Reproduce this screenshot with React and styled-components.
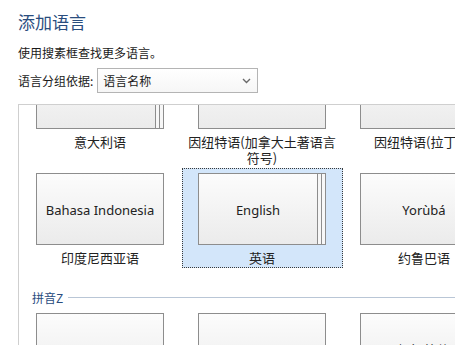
import React, { useLayoutEffect, useRef } from "react";
import styled, { createGlobalStyle, css } from "styled-components";

const Global = createGlobalStyle`
  html, body {
    margin: 0;
    padding: 0;
    width: 455px;
    height: 345px;
    overflow: hidden;
    background: #ffffff;
  }
  body {
    font-family: "Noto Sans", "Noto Sans CJK SC", sans-serif;
    color: #222;
  }
`;

const Page = styled.div`
  display: flex;
  flex-direction: column;
  width: 455px;
  height: 345px;
  overflow: hidden;
`;

const Header = styled.div`
  display: flex;
  flex-direction: column;
  padding: 10px 0 0 18px;
`;

const Title = styled.h1`
  margin: 0;
  font-family: "Noto Sans CJK SC", sans-serif;
  font-weight: 400;
  font-size: 17px;
  line-height: 24px;
  color: #2a4d7e;
`;

const Hint = styled.p`
  margin: 11px 0 0;
  font-family: "Noto Sans CJK SC", sans-serif;
  font-size: 12px;
  line-height: 16px;
  color: #1a1a1a;
`;

const GroupByRow = styled.div`
  display: flex;
  align-items: center;
  gap: 4px;
  margin-top: 7px;
  font-family: "Noto Sans CJK SC", sans-serif;
  font-size: 12px;
  color: #1a1a1a;
`;

const SelectBox = styled.div`
  display: flex;
  align-items: center;
  justify-content: space-between;
  box-sizing: border-box;
  width: 161px;
  height: 25px;
  padding: 0 6px 0 5px;
  border: 1px solid #b4b4b4;
  background: linear-gradient(#ffffff, #f6f6f6);
  font-size: 12px;
  color: #1a1a1a;
`;

const Panel = styled.div`
  box-sizing: border-box;
  margin: 11px 0 0 18px;
  width: 520px;
  height: 260px;
  flex-shrink: 0;
  border-top: 1px solid #cfcfcf;
  border-left: 1px solid #cfcfcf;
  overflow: hidden;
`;

const Content = styled.div`
  padding: 0 0 0 1px;
`;

const GroupHeader = styled.div`
  display: flex;
  align-items: center;
  gap: 5px;
  height: 16px;
  margin: ${(p) => (p.$first ? "8px" : "21px")} 0 3px;
  padding-left: 12px;
  font-family: "Noto Sans CJK SC", sans-serif;
  font-size: 12px;
  color: #2a4d7e;
  &::after {
    content: "";
    flex: 1;
    height: 1px;
    background: #b9c6d6;
  }
`;

const Grid = styled.div`
  display: grid;
  grid-template-columns: repeat(3, 161px);
  column-gap: 1px;
  align-items: stretch;
`;

const Item = styled.div`
  box-sizing: border-box;
  display: flex;
  flex-direction: column;
  align-items: center;
  padding: 4px 1px 1px 0;
  border: 1px solid transparent;
  ${(p) =>
    p.$selected &&
    css`
      border: 1px dotted #3a3a3a;
      background: #d3e6fa;
    `}
`;

const TileWrap = styled.div`
  position: relative;
  isolation: isolate;
  width: 128px;
  height: 72px;
  flex-shrink: 0;
  ${(p) =>
    p.$stacked &&
    css`
      &::before,
      &::after {
        content: "";
        position: absolute;
        top: 0;
        box-sizing: border-box;
        width: 120px;
        height: 72px;
        border: 1px solid #8d8d8d;
        background: #f7f7f7;
      }
      &::before {
        left: 4px;
        z-index: -1;
      }
      &::after {
        left: 8px;
        z-index: -2;
      }
    `}
`;

const TileFace = styled.div`
  position: relative;
  box-sizing: border-box;
  display: flex;
  align-items: center;
  justify-content: center;
  width: ${(p) => (p.$stacked ? "120px" : "128px")};
  height: 72px;
  border: 1px solid #8d8d8d;
  background: linear-gradient(#fcfcfc, #ebebeb);
  font-family: "Noto Sans", "Noto Sans CJK SC", sans-serif;
  font-size: 13px;
  color: #222;
  padding-top: 1px;
  white-space: nowrap;
`;

const Label = styled.div`
  margin-top: 5px;
  width: 100%;
  text-align: center;
  font-family: "Noto Sans CJK SC", sans-serif;
  font-size: 13px;
  line-height: 16px;
  color: #222;
  padding: 0 3px;
  box-sizing: border-box;
  white-space: ${(p) => (p.$nowrap ? "nowrap" : "normal")};
`;

const Chevron = () => (
  <svg width="9" height="6" viewBox="0 0 9 6" aria-hidden="true">
    <path d="M1 1 L4.5 4.5 L8 1" fill="none" stroke="#6a6a6a" strokeWidth="1.4" />
  </svg>
);

const groups = [
  {
    name: "拼音Y",
    items: [
      { native: "Italiano", label: "意大利语", stacked: true },
      { native: "ᐃᓄᒃᑎᑐᑦ", label: "因纽特语(加拿大土著语言符号)" },
      { native: "Inuktitut", label: "因纽特语(拉丁语)", nowrap: true },
      { native: "Bahasa Indonesia", label: "印度尼西亚语" },
      { native: "English", label: "英语", stacked: true, selected: true },
      { native: "Yorùbá", label: "约鲁巴语" },
    ],
  },
  {
    name: "拼音Z",
    items: [
      { native: "isiZulu", label: "祖鲁语" },
      { native: "", label: "壮语" },
      { native: "中文(简体)", label: "中文(简体)" },
    ],
  },
];

function Tile({ text, stacked }) {
  return (
    <TileWrap $stacked={stacked}>
      <TileFace $stacked={stacked}>{text}</TileFace>
    </TileWrap>
  );
}

export default function App() {
  const scroller = useRef(null);
  useLayoutEffect(() => {
    if (scroller.current) scroller.current.scrollTop = 80;
  }, []);

  return (
    <Page>
      <Global />
      <Header>
        <Title>添加语言</Title>
        <Hint>使用搜素框查找更多语言。</Hint>
        <GroupByRow>
          <span>语言分组依据:</span>
          <SelectBox>
            <span>语言名称</span>
            <Chevron />
          </SelectBox>
        </GroupByRow>
      </Header>
      <Panel ref={scroller}>
        <Content>
          {groups.map((g, gi) => (
            <React.Fragment key={g.name}>
              <GroupHeader $first={gi === 0}>{g.name}</GroupHeader>
              <Grid>
                {g.items.map((it, i) => (
                  <Item key={i} $selected={it.selected}>
                    <Tile text={it.native} stacked={it.stacked} />
                    <Label $nowrap={it.nowrap}>{it.label}</Label>
                  </Item>
                ))}
              </Grid>
            </React.Fragment>
          ))}
        </Content>
      </Panel>
    </Page>
  );
}
